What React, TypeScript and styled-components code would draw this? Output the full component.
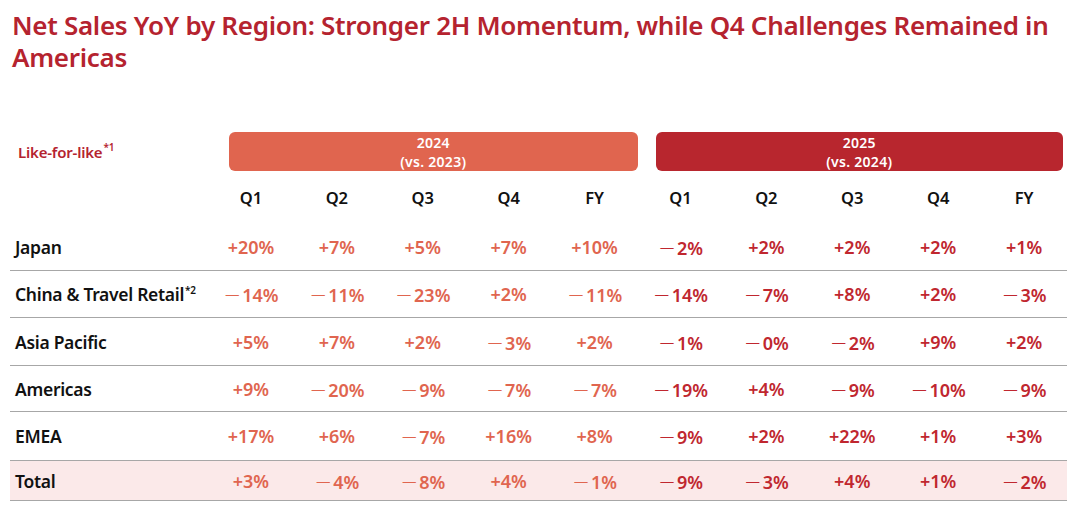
import React from "react";
import styled, { createGlobalStyle } from "styled-components";

const GlobalStyle = createGlobalStyle`
  html, body {
    margin: 0;
    padding: 0;
    background: #ffffff;
  }
  body {
    font-family: "Noto Sans", "Noto Sans CJK JP", sans-serif;
    width: 1080px;
    height: 530px;
    overflow: hidden;
  }
`;

const Page = styled.div`
  padding: 9px 0 0 0;
`;

const Title = styled.h1`
  margin: 0 0 0 12px;
  font-size: 26px;
  line-height: 32px;
  font-weight: 600;
  color: #b5232f;
  letter-spacing: -0.3px;
  width: 1060px;
`;

const Table = styled.div`
  margin: 59px 0 0 10px;
  width: 1057px;
`;

const Row = styled.div<{ total?: boolean; height: number; lined?: boolean }>`
  display: grid;
  grid-template-columns: 198px repeat(10, 1fr);
  align-items: center;
  height: ${(p) => p.height}px;
  background: ${(p) => (p.total ? "#fbe9e9" : "transparent")};
  border-bottom: ${(p) => (p.lined ? "1.5px solid #a7a7a7" : "none")};
  box-sizing: border-box;
`;

const LikeLabel = styled.div`
  padding-left: 8px;
  font-size: 15px;
  font-weight: 600;
  color: #b5232f;
  letter-spacing: -0.2px;
`;

const Banner = styled.div<{ year: "2024" | "2025" }>`
  grid-column: ${(p) => (p.year === "2024" ? "2 / 7" : "7 / 12")};
  margin: ${(p) => (p.year === "2024" ? "0 0 0 21px" : "0 4px 0 18px")};
  height: 39px;
  border-radius: 6px;
  background: ${(p) => (p.year === "2024" ? "#e0654f" : "#b8262e")};
  color: #ffffff;
  display: flex;
  flex-direction: column;
  align-items: center;
  justify-content: center;
  font-size: 14px;
  font-weight: 600;
  line-height: 19px;
  letter-spacing: 0.3px;
`;

const Head = styled.div`
  text-align: center;
  font-size: 16.5px;
  font-weight: 600;
  color: #111111;
`;

const Label = styled.div`
  padding-left: 5px;
  font-size: 17.5px;
  font-weight: 600;
  color: #111111;
  letter-spacing: -0.3px;
  white-space: nowrap;
`;

const Sup = styled.sup`
  font-size: 10px;
  line-height: 0;
  vertical-align: 0;
  position: relative;
  top: -0.7em;
  margin-left: 1px;
`;

const Value = styled.div<{ year: "2024" | "2025" }>`
  text-align: center;
  font-size: 18px;
  font-weight: 600;
  color: ${(p) => (p.year === "2024" ? "#e0654f" : "#c0272f")};
  white-space: nowrap;
`;

const Minus = styled.span`
  font-family: "Noto Sans CJK JP", sans-serif;
  font-weight: 300;
  margin-right: 1px;
`;

const quarters = ["Q1", "Q2", "Q3", "Q4", "FY"];

type Region = { name: string; note?: string; values: string[]; total?: boolean; h: number };

const regions: Region[] = [
  { name: "Japan", h: 47, values: ["+20%", "+7%", "+5%", "+7%", "+10%", "-2%", "+2%", "+2%", "+2%", "+1%"] },
  { name: "China & Travel Retail", h: 47, note: "*2", values: ["-14%", "-11%", "-23%", "+2%", "-11%", "-14%", "-7%", "+8%", "+2%", "-3%"] },
  { name: "Asia Pacific", h: 48, values: ["+5%", "+7%", "+2%", "-3%", "+2%", "-1%", "-0%", "-2%", "+9%", "+2%"] },
  { name: "Americas", h: 46, values: ["+9%", "-20%", "-9%", "-7%", "-7%", "-19%", "+4%", "-9%", "-10%", "-9%"] },
  { name: "EMEA", h: 49, values: ["+17%", "+6%", "-7%", "+16%", "+8%", "-9%", "+2%", "+22%", "+1%", "+3%"] },
  { name: "Total", h: 40, total: true, values: ["+3%", "-4%", "-8%", "+4%", "-1%", "-9%", "-3%", "+4%", "+1%", "-2%"] },
];

function Cell({ v, year }: { v: string; year: "2024" | "2025" }) {
  if (v.startsWith("-")) {
    return (
      <Value year={year}>
        <Minus>－</Minus>
        {v.slice(1)}
      </Value>
    );
  }
  return <Value year={year}>{v}</Value>;
}

export default function App() {
  return (
    <Page>
      <GlobalStyle />
      <Title>
        Net Sales YoY by Region: Stronger 2H Momentum, while Q4 Challenges Remained in
        Americas
      </Title>
      <Table>
        <Row height={39}>
          <LikeLabel>
            Like-for-like<Sup>*1</Sup>
          </LikeLabel>
          <Banner year="2024">
            <span>2024</span>
            <span>(vs. 2023)</span>
          </Banner>
          <Banner year="2025">
            <span>2025</span>
            <span>(vs. 2024)</span>
          </Banner>
        </Row>
        <Row height={53}>
          <div />
          {[...quarters, ...quarters].map((q, i) => (
            <Head key={i}>{q}</Head>
          ))}
        </Row>
        {regions.map((r) => (
          <Row key={r.name} height={r.h} lined total={r.total}>
            <Label>
              {r.name}
              {r.note && <Sup>{r.note}</Sup>}
            </Label>
            {r.values.map((v, i) => (
              <Cell key={i} v={v} year={i < 5 ? "2024" : "2025"} />
            ))}
          </Row>
        ))}
      </Table>
    </Page>
  );
}
